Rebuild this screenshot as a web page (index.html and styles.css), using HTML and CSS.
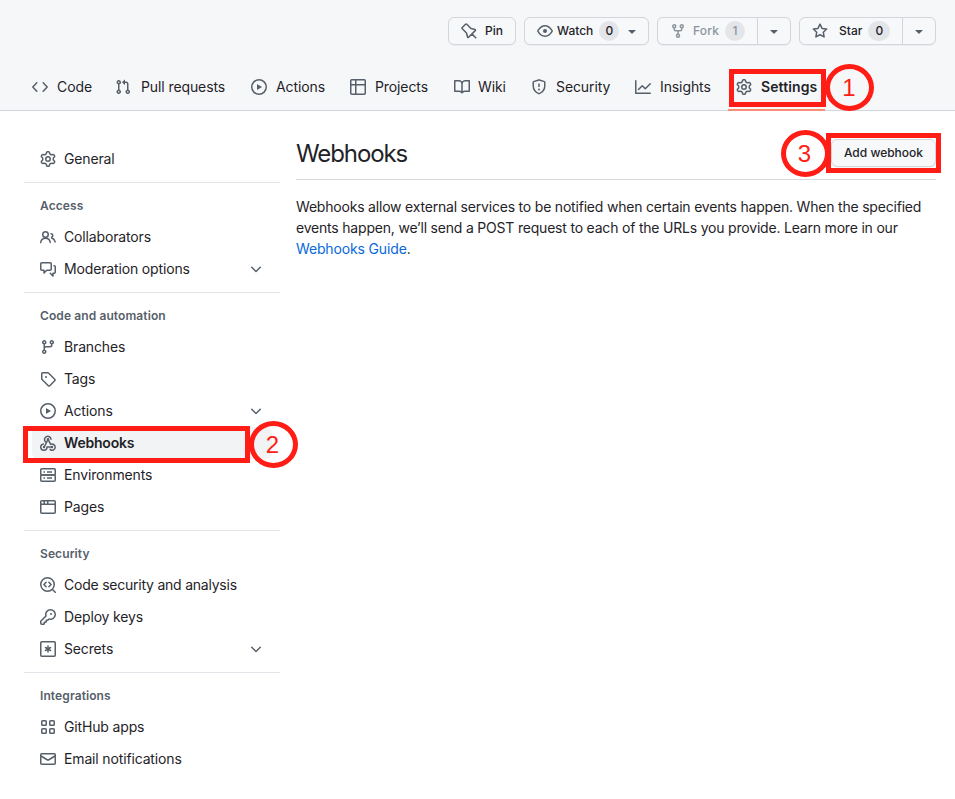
FILE: index.html
```html
<!DOCTYPE html>
<html lang="en">
<head>
<meta charset="utf-8">
<title>Webhooks</title>
<link rel="stylesheet" href="styles.css">
</head>
<body>
<svg class="defs" width="0" height="0" aria-hidden="true">
  <symbol id="gear" viewBox="0 0 16 16"><path d="M8 0a8.2 8.2 0 0 1 .701.031C9.444.095 9.99.645 10.16 1.29l.288 1.107c.018.066.079.158.212.224.231.114.454.243.668.386.123.082.233.09.299.071l1.103-.303c.644-.176 1.392.021 1.82.63.27.385.506.792.704 1.218.315.675.111 1.422-.364 1.891l-.814.806c-.049.048-.098.147-.088.294.016.257.016.515 0 .772-.01.147.038.246.088.294l.814.806c.475.469.679 1.216.364 1.891a7.977 7.977 0 0 1-.704 1.217c-.428.61-1.176.807-1.82.63l-1.102-.302c-.067-.019-.177-.011-.3.071a5.909 5.909 0 0 1-.668.386c-.133.066-.194.158-.211.224l-.29 1.106c-.168.646-.715 1.196-1.458 1.26a8.006 8.006 0 0 1-1.402 0c-.743-.064-1.289-.614-1.458-1.26l-.289-1.106c-.018-.066-.079-.158-.212-.224a5.738 5.738 0 0 1-.668-.386c-.123-.082-.233-.09-.299-.071l-1.103.303c-.644.176-1.392-.021-1.82-.63a8.12 8.12 0 0 1-.704-1.218c-.315-.675-.111-1.422.363-1.891l.815-.806c.05-.048.098-.147.088-.294a6.214 6.214 0 0 1 0-.772c.01-.147-.038-.246-.088-.294l-.815-.806C.635 6.045.431 5.298.746 4.623a7.92 7.92 0 0 1 .704-1.217c.428-.61 1.176-.807 1.82-.63l1.102.302c.067.019.177.011.3-.071.214-.143.437-.272.668-.386.133-.066.194-.158.211-.224l.29-1.106C6.009.645 6.556.095 7.299.03 7.53.01 7.764 0 8 0Zm-.571 1.525c-.036.003-.108.036-.137.146l-.289 1.105c-.147.561-.549.967-.998 1.189-.173.086-.34.183-.5.29-.417.278-.97.423-1.529.27l-1.103-.303c-.109-.03-.175.016-.195.045-.22.312-.412.644-.573.99-.014.031-.021.11.059.19l.815.806c.411.406.562.957.53 1.456a4.709 4.709 0 0 0 0 .582c.032.499-.119 1.05-.53 1.456l-.815.806c-.081.08-.073.159-.059.19.162.346.353.677.573.989.02.03.085.076.195.046l1.102-.303c.56-.153 1.113-.008 1.53.27.161.107.328.204.501.29.447.222.85.629.997 1.189l.289 1.105c.029.109.101.143.137.146a6.6 6.6 0 0 0 1.142 0c.036-.003.108-.036.137-.146l.289-1.105c.147-.561.549-.967.998-1.189.173-.086.34-.183.5-.29.417-.278.97-.423 1.529-.27l1.103.303c.109.029.175-.016.195-.045.22-.313.411-.644.573-.99.014-.031.021-.11-.059-.19l-.815-.806c-.411-.406-.562-.957-.53-1.456a4.709 4.709 0 0 0 0-.582c-.032-.499.119-1.05.53-1.456l.815-.806c.081-.08.073-.159.059-.19a6.464 6.464 0 0 0-.573-.989c-.02-.03-.085-.076-.195-.046l-1.102.303c-.56.153-1.113.008-1.53-.27a4.44 4.44 0 0 0-.501-.29c-.447-.222-.85-.629-.997-1.189l-.289-1.105c-.029-.11-.101-.143-.137-.146a6.6 6.6 0 0 0-1.142 0ZM11 8a3 3 0 1 1-6 0 3 3 0 0 1 6 0ZM9.500 8a1.500 1.500 0 1 0-3.001.001A1.500 1.500 0 0 0 9.500 8Z"/></symbol>
  <symbol id="pin" viewBox="0 0 16 16"><path class="line" d="M10.400 10.400 15.200 15.200M5.800 1.300 10 5.500 14 6.500C14.600 6.700 14.600 7.200 14.200 7.600L7.600 14.200C7.200 14.600 6.700 14.600 6.500 14L5.500 10 1.300 5.800C.9 5.400.9 4.900 1.300 4.500L4.500 1.300C4.900.9 5.400.9 5.800 1.300Z"/></symbol>
  <symbol id="eye" viewBox="0 0 16 16"><path class="line" d="M.9 7.600C2 5.900 4.300 2.750 8 2.750s6 3.150 7.100 4.850a.7.700 0 0 1 0 .8C14 10.100 11.700 13.250 8 13.250S2 10.100.9 8.400a.7.700 0 0 1 0-.8Z"/><circle cx="8" cy="8" r="2"/></symbol>
  <symbol id="fork" viewBox="0 0 16 16"><path class="line" d="M4.250 5v1.250c0 .83.67 1.500 1.500 1.500h4.500c.83 0 1.500-.67 1.500-1.500V5M8 7.750V11"/><circle class="line" cx="4.250" cy="3.250" r="1.500"/><circle class="line" cx="11.750" cy="3.250" r="1.500"/><circle class="line" cx="8" cy="12.750" r="1.500"/></symbol>
  <symbol id="star" viewBox="0 0 16 16"><path class="line" d="m8 1.200 2.050 4.200 4.600.67-3.330 3.240.79 4.590L8 11.730 3.890 13.900l.79-4.590-3.330-3.240 4.600-.67Z"/></symbol>
  <symbol id="caret" viewBox="0 0 16 16"><path d="M4.427 7.427l3.396 3.396a.25.25 0 0 0 .354 0l3.396-3.396A.25.25 0 0 0 11.396 7H4.604a.25.25 0 0 0-.177.427Z"/></symbol>
  <symbol id="code" viewBox="0 0 16 16"><path class="line round" d="M4.800 3.700.8 8l4 4.300M11.200 3.700l4 4.300-4 4.300"/></symbol>
  <symbol id="pull" viewBox="0 0 16 16"><path d="M1.500 3.250a2.250 2.250 0 1 1 3 2.122v5.256a2.251 2.251 0 1 1-1.500 0V5.372A2.250 2.250 0 0 1 1.500 3.250Zm5.677-.177L9.573.677A.25.25 0 0 1 10 .854V2.500h1A2.500 2.500 0 0 1 13.500 5v5.628a2.251 2.251 0 1 1-1.500 0V5a1 1 0 0 0-1-1h-1v1.646a.25.25 0 0 1-.427.177L7.177 3.427a.25.25 0 0 1 0-.354ZM3.750 2.500a.75.75 0 1 0 0 1.500.75.75 0 0 0 0-1.500Zm0 9.500a.75.75 0 1 0 0 1.500.75.75 0 0 0 0-1.500Zm8.250.75a.75.75 0 1 0 1.500 0 .75.75 0 0 0-1.500 0Z"/></symbol>
  <symbol id="play" viewBox="0 0 16 16"><circle class="line" cx="8" cy="8" r="7.250"/><path d="M6.379 5.227A.25.25 0 0 0 6 5.442v5.117a.25.25 0 0 0 .379.214l4.264-2.559a.25.25 0 0 0 0-.428Z"/></symbol>
  <symbol id="table" viewBox="0 0 16 16"><path class="line" d="M1.750.75h12.500a1 1 0 0 1 1 1v12.500a1 1 0 0 1-1 1H1.750a1 1 0 0 1-1-1V1.750a1 1 0 0 1 1-1ZM.75 5.750h14.500M5.750.75v14.500"/></symbol>
  <symbol id="book" viewBox="0 0 16 16"><path d="M0 1.750A.75.75 0 0 1 .75 1h4.253c1.227 0 2.317.59 3 1.501A3.743 3.743 0 0 1 11.006 1h4.245a.75.75 0 0 1 .75.75v10.500a.75.75 0 0 1-.75.75h-4.507a2.250 2.250 0 0 0-1.591.659l-.622.621a.75.75 0 0 1-1.060 0l-.622-.621A2.250 2.250 0 0 0 5.258 13H.75a.75.75 0 0 1-.75-.75Zm7.251 10.324.004-5.073-.002-2.253A2.250 2.250 0 0 0 5.003 2.500H1.500v9h3.757a3.750 3.750 0 0 1 1.994.574ZM8.755 4.750l-.004 7.322a3.752 3.752 0 0 1 1.992-.572H14.500v-9h-3.495a2.250 2.250 0 0 0-2.250 2.250Z"/></symbol>
  <symbol id="shield" viewBox="0 0 16 16"><path class="line" d="M7.700 1 2.500 2.650a.25.25 0 0 0-.25.250V7c0 3.500 1.600 5.900 5.500 7.600q.250.100.5 0c3.900-1.700 5.500-4.100 5.500-7.600V2.900a.25.25 0 0 0-.25-.25L8.300 1q-.3-.1-.6 0ZM8 4.500V8"/><circle cx="8" cy="10.500" r="1"/></symbol>
  <symbol id="graph" viewBox="0 0 16 16"><path class="line round" d="M.75 1.750v12.500h14.500M3.500 10.500l3.750-3.750 3 3 5-5"/></symbol>
  <symbol id="people" viewBox="0 0 16 16"><circle class="line" cx="5.500" cy="5.500" r="2.750"/><path class="line round" d="M.75 13.500a4.780 4.780 0 0 1 9.500 0M11 4.750a1.750 1.750 0 0 1 .65 3.370v.9c1.900.55 3.100 1.900 3.550 3.830"/></symbol>
  <symbol id="talk" viewBox="0 0 16 16"><path class="line round" d="M1.750 1.750h8.500a1 1 0 0 1 1 1v5.500a1 1 0 0 1-1 1h-3.500L4 12V9.250H1.750a1 1 0 0 1-1-1v-5.500a1 1 0 0 1 1-1ZM14 4.750h.25a1 1 0 0 1 1 1v5.500a1 1 0 0 1-1 1H13V15l-2.750-2.750"/></symbol>
  <symbol id="branch" viewBox="0 0 16 16"><path d="M9.500 3.250a2.250 2.250 0 1 1 3 2.122V6A2.500 2.500 0 0 1 10 8.500H6a1 1 0 0 0-1 1v1.128a2.251 2.251 0 1 1-1.500 0V5.372a2.250 2.250 0 1 1 1.500 0v1.836A2.493 2.493 0 0 1 6 7h4a1 1 0 0 0 1-1v-.628A2.250 2.250 0 0 1 9.500 3.250Zm-6 0a.75.75 0 1 0 1.500 0 .75.75 0 0 0-1.500 0Zm8.250-.75a.75.75 0 1 0 0 1.500.75.75 0 0 0 0-1.500ZM4.250 12a.75.75 0 1 0 0 1.500.75.75 0 0 0 0-1.500Z"/></symbol>
  <symbol id="tag" viewBox="0 0 16 16"><path class="line" d="M2.750 1.750h5q.4 0 .7.300l6.250 6.250a1 1 0 0 1 0 1.400l-5 5a1 1 0 0 1-1.400 0L2.050 8.450q-.3-.3-.3-.7v-5a1 1 0 0 1 1-1Z"/><circle cx="6" cy="6" r="1"/></symbol>
  <symbol id="hook" viewBox="0 0 16 16"><path class="line round" d="M5.300 6.700A3.250 3.250 0 1 1 11 4.200M8 4.300l2.700 5c2-.8 4.500.4 4.500 2.900 0 2.700-3.200 4-5.100 2.200M8 4.300 4.500 11.500M3.300 8.900c-3.800.8-3.200 6.300.6 6.300 2 0 3.100-1.500 3.100-3.300h4.500"/><circle cx="8" cy="4.300" r="1.200"/><circle cx="4" cy="12" r="1.200"/><circle cx="12" cy="12" r="1.200"/></symbol>
  <symbol id="server" viewBox="0 0 16 16"><rect class="line" x=".75" y="1.750" width="14.500" height="6.200" rx="1"/><rect class="line" x=".75" y="7.950" width="14.500" height="6.300" rx="1"/><path class="line" d="M3.500 5h1.500M7 5h5M3.500 11h1.500M7 11h5"/></symbol>
  <symbol id="browser" viewBox="0 0 16 16"><rect class="line" x=".75" y="1.750" width="14.500" height="12.500" rx="1"/><path class="line" d="M.75 5.250h14.500M4.250 2v3M7.750 2v3"/></symbol>
  <symbol id="codescan" viewBox="0 0 16 16"><circle class="line" cx="7.500" cy="7.500" r="6.750"/><path class="line round" d="m12.500 12.500 2.750 2.750M6.100 5.300 3.900 7.500l2.200 2.200M8.900 5.300l2.200 2.200-2.200 2.200"/></symbol>
  <symbol id="key" viewBox="0 0 16 16"><path d="M10.500 0a5.499 5.499 0 1 1-1.288 10.848l-.932.932a.749.749 0 0 1-.530.220H7v.750a.749.749 0 0 1-.220.530l-.500.500a.749.749 0 0 1-.530.220H5v.750a.749.749 0 0 1-.220.530l-.500.500a.749.749 0 0 1-.530.220h-2A1.750 1.750 0 0 1 0 14.250v-2c0-.199.079-.389.220-.530l4.932-4.932A5.500 5.500 0 0 1 10.500 0Zm-4 5.500c-.001.431.069.86.205 1.269a.75.75 0 0 1-.181.768L1.500 12.560v1.690c0 .138.112.25.25.25h1.690l.060-.060v-1.190a.75.75 0 0 1 .75-.75h1.190l.060-.060v-1.190a.75.75 0 0 1 .75-.75h1.190l1.023-1.025a.75.75 0 0 1 .768-.180A4 4 0 1 0 6.500 5.500ZM11 6a1 1 0 1 1 0-2 1 1 0 0 1 0 2Z"/></symbol>
  <symbol id="secret" viewBox="0 0 16 16"><rect class="line" x=".75" y=".75" width="14.500" height="14.500" rx="1"/><path class="line round" d="M8 5v6M5.400 6.500l5.200 3M10.600 6.500l-5.200 3"/></symbol>
  <symbol id="apps" viewBox="0 0 16 16"><rect class="line" x="1.750" y="1.750" width="4.500" height="4.500" rx=".8"/><rect class="line" x="9.750" y="1.750" width="4.500" height="4.500" rx=".8"/><rect class="line" x="1.750" y="9.750" width="4.500" height="4.500" rx=".8"/><rect class="line" x="9.750" y="9.750" width="4.500" height="4.500" rx=".8"/></symbol>
  <symbol id="mail" viewBox="0 0 16 16"><rect class="line" x=".75" y="2.750" width="14.500" height="10.500" rx="1"/><path class="line" d="m1 5 6.600 4q.4.200.8 0L15 5"/></symbol>
  <symbol id="chevron" viewBox="0 0 16 16"><path class="line round" d="M3.750 6.250 8 10.500l4.250-4.250"/></symbol>
</svg>

<header class="top">
  <div class="actions">
    <button class="btn pin"><svg class="icon"><use href="#pin"/></svg><span>Pin</span></button>
    <button class="btn watch"><svg class="icon"><use href="#eye"/></svg><span>Watch</span><b class="count">0</b><svg class="icon"><use href="#caret"/></svg></button>
    <div class="btn fork"><button class="part muted"><svg class="icon"><use href="#fork"/></svg><span>Fork</span><b class="count">1</b></button><button class="drop"><svg class="icon"><use href="#caret"/></svg></button></div>
    <div class="btn star"><button class="part"><svg class="icon"><use href="#star"/></svg><span>Star</span><b class="count">0</b></button><button class="drop"><svg class="icon"><use href="#caret"/></svg></button></div>
  </div>
  <nav class="tabs">
    <a class="tab t-code"><svg class="icon"><use href="#code"/></svg><span>Code</span></a>
    <a class="tab t-pull"><svg class="icon"><use href="#pull"/></svg><span>Pull requests</span></a>
    <a class="tab t-actions"><svg class="icon"><use href="#play"/></svg><span>Actions</span></a>
    <a class="tab t-projects"><svg class="icon"><use href="#table"/></svg><span>Projects</span></a>
    <a class="tab t-wiki"><svg class="icon"><use href="#book"/></svg><span>Wiki</span></a>
    <a class="tab t-security"><svg class="icon"><use href="#shield"/></svg><span>Security</span></a>
    <a class="tab t-insights"><svg class="icon"><use href="#graph"/></svg><span>Insights</span></a>
    <a class="tab t-settings current"><svg class="icon"><use href="#gear"/></svg><span>Settings</span><i class="box box-1"></i><i class="step step-1">1</i></a>
  </nav>
</header>

<div class="layout">
  <aside class="side">
    <section class="group">
      <a class="item"><svg class="icon"><use href="#gear"/></svg><span>General</span></a>
    </section>
    <section class="group">
      <h2>Access</h2>
      <a class="item"><svg class="icon"><use href="#people"/></svg><span>Collaborators</span></a>
      <a class="item"><svg class="icon"><use href="#talk"/></svg><span>Moderation options</span><svg class="icon more"><use href="#chevron"/></svg></a>
    </section>
    <section class="group">
      <h2>Code and automation</h2>
      <a class="item"><svg class="icon"><use href="#branch"/></svg><span>Branches</span></a>
      <a class="item"><svg class="icon"><use href="#tag"/></svg><span>Tags</span></a>
      <a class="item"><svg class="icon"><use href="#play"/></svg><span>Actions</span><svg class="icon more"><use href="#chevron"/></svg></a>
      <a class="item selected"><svg class="icon"><use href="#hook"/></svg><span>Webhooks</span><i class="box box-2"></i><i class="step step-2">2</i></a>
      <a class="item"><svg class="icon"><use href="#server"/></svg><span>Environments</span></a>
      <a class="item"><svg class="icon"><use href="#browser"/></svg><span>Pages</span></a>
    </section>
    <section class="group">
      <h2>Security</h2>
      <a class="item tight"><svg class="icon"><use href="#codescan"/></svg><span>Code security and analysis</span></a>
      <a class="item"><svg class="icon"><use href="#key"/></svg><span>Deploy keys</span></a>
      <a class="item"><svg class="icon"><use href="#secret"/></svg><span>Secrets</span><svg class="icon more"><use href="#chevron"/></svg></a>
    </section>
    <section class="group">
      <h2>Integrations</h2>
      <a class="item"><svg class="icon"><use href="#apps"/></svg><span>GitHub apps</span></a>
      <a class="item"><svg class="icon"><use href="#mail"/></svg><span>Email notifications</span></a>
    </section>
  </aside>
  <main class="main">
    <div class="subhead">
      <h1>Webhooks</h1>
      <div class="add"><button class="btn add-btn">Add webhook</button><i class="box box-3"></i><i class="step step-3">3</i></div>
    </div>
    <p>Webhooks allow external services to be notified when certain events happen. When the specified<br>events happen, we’ll send a POST request to each of the URLs you provide. Learn more in our<br><a class="link">Webhooks Guide</a>.</p>
  </main>
</div>
</body>
</html>
```
FILE: styles.css
```css
* { box-sizing: border-box; }
body {
  margin: 0;
  height: 799px;
  overflow: hidden;
  background: #fff;
  color: #1f2328;
  font: 14px/21px Inter, "Liberation Sans", sans-serif;
}
.defs { position: absolute; }
.icon { width: 16px; height: 16px; flex: none; fill: currentColor; color: #57606a; }
.line { fill: none; stroke: currentColor; stroke-width: 1.5; stroke-linejoin: round; }
.round { stroke-linecap: round; }
button { font: inherit; color: inherit; background: none; border: 0; padding: 0; }
span { white-space: nowrap; }

.top {
  height: 111px;
  background: #f6f7f9;
  border-bottom: 1px solid #d0d7de;
  padding-top: 17px;
}
.actions { display: flex; justify-content: flex-end; gap: 8px; padding-right: 19px; }
.btn {
  display: flex;
  align-items: center;
  height: 28px;
  border: 1px solid #d2d5d9;
  border-radius: 6px;
  background: #f6f8fa;
  box-shadow: 0 1px 0 rgba(31, 35, 40, .04);
  font-size: 12px;
  font-weight: 500;
  line-height: 20px;
}
.pin { width: 68px; padding-left: 12px; gap: 8px; }
.watch { width: 125px; padding-left: 12px; gap: 4px; }
.watch .count { margin: 0 1px 0 2px; }
.fork { width: 134px; }
.star { width: 137px; }
.part { display: flex; align-items: center; height: 26px; padding-left: 12px; flex: 1; }
.part .count { margin-left: 6px; }
.star .count { min-width: 22px; }
.fork .part span { margin-left: 7px; letter-spacing: .15px; }
.star .part span { margin-left: 11px; }
.muted, .muted .icon { color: #8c959f; }
.drop { display: flex; align-items: center; justify-content: center; width: 33px; height: 26px; border-left: 1px solid #d2d5d9; }
.count {
  min-width: 20px;
  height: 20px;
  border-radius: 10px;
  background: #e3e5e8;
  font-weight: 500;
  text-align: center;
}

.tabs { display: flex; padding-left: 24px; margin-top: 18px; }
.tab { position: relative; display: flex; align-items: center; gap: 9px; height: 48px; padding-left: 8px; letter-spacing: -.1px; }
.tab span, .item span { padding-bottom: 2px; }
.t-code { width: 83px; }
.t-pull { width: 136px; gap: 10px; }
.t-actions { width: 99px; }
.t-projects { width: 104px; }
.t-wiki { width: 77px; gap: 8px; }
.t-security { width: 104px; }
.t-insights { width: 101px; }
.t-settings { width: 97px; }
.current { font-weight: 600; letter-spacing: .1px; border-bottom: 2px solid #fd8c73; padding-top: 2px; }

.layout { display: flex; gap: 16px; padding-left: 24px; }
.side { width: 256px; padding-top: 24px; }
.group { padding: 8px 8px 7px; border-bottom: 1px solid #e1e4e8; }
.group:last-child { border: 0; }
.side h2 { margin: 0; padding-left: 8px; font-size: 12px; line-height: 30px; font-weight: 600; letter-spacing: .1px; color: #57606a; }
.item { position: relative; display: flex; align-items: center; gap: 8px; height: 32px; padding: 0 8px; letter-spacing: -.15px; }
.tight { letter-spacing: -.23px; }
.more { margin-left: auto; }
.selected { background: #f2f3f5; border-radius: 6px; font-weight: 600; letter-spacing: -.2px; }

.main { width: 640px; padding-top: 23px; }
.subhead { display: flex; justify-content: space-between; height: 46px; border-bottom: 1px solid #d8dbdf; }
h1 { margin: 0; font-size: 24px; line-height: 40px; font-weight: 400; letter-spacing: -1.1px; }
.add { position: relative; padding-top: 5px; }
.add-btn { width: 105px; justify-content: center; }
p { margin: 16px 0 0; white-space: nowrap; letter-spacing: -.2px; }
.link { color: #0969da; letter-spacing: -.15px; }

.box, .step { position: absolute; z-index: 2; border: 5px solid #ff1d15; }
.step {
  width: 49px;
  height: 47px;
  border-radius: 50%;
  color: #ff1d15;
  font: 24px/37px "Liberation Sans", sans-serif;
  text-indent: -1px;
  letter-spacing: 0;
  text-align: center;
}
.box-1 { left: 1px; top: 6px; width: 97px; height: 38px; }
.step-1 { left: 97px; top: 1px; }
.box-2 { left: -9px; top: -1px; width: 227px; height: 37px; }
.step-2 { left: 216.500px; top: -6.500px; }
.box-3 { left: -5px; top: -1px; width: 115px; height: 40px; }
.step-3 { left: -50.500px; top: -4.500px; }
```
